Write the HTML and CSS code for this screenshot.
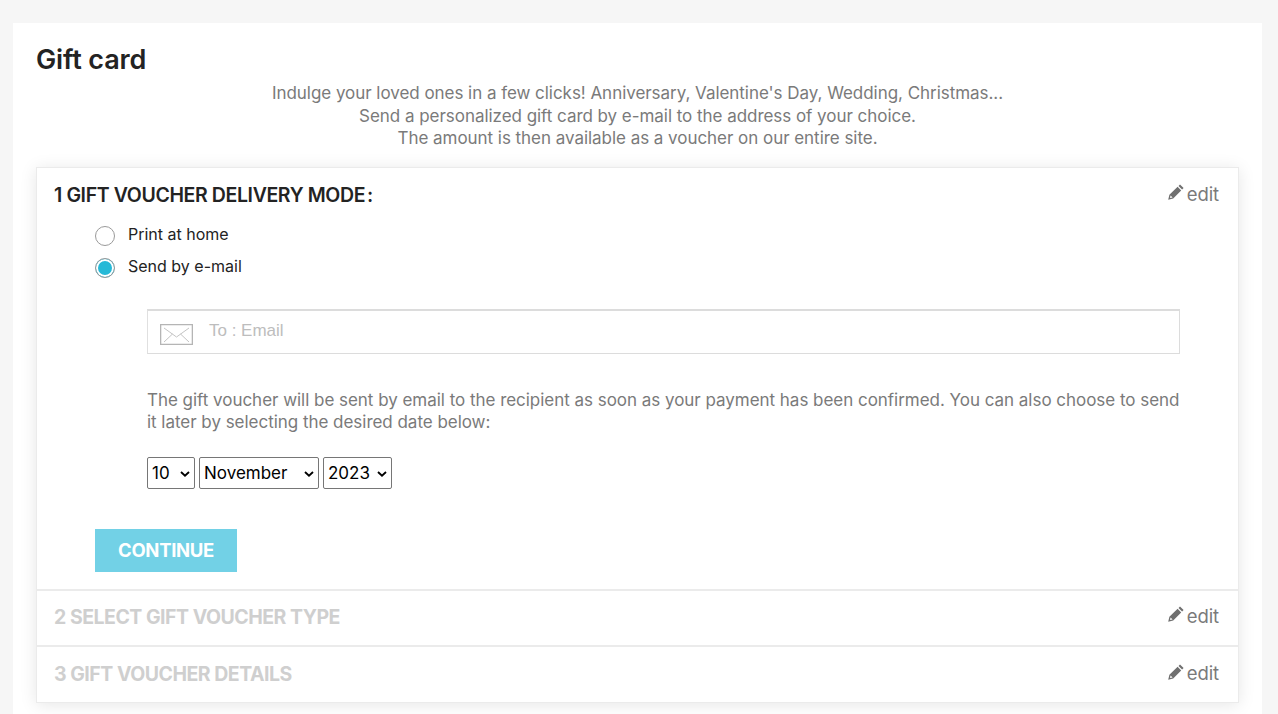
FILE: index.html
```html
<!DOCTYPE html>
<html>
<head>
    <title>Gift card</title>
    <link rel="stylesheet" href="styles.css">
</head>
<body>
    <div class="container">
        <h1>Gift card</h1>
        <div class="intro">
            <p>Indulge your loved ones in a few clicks! Anniversary, Valentine's Day, Wedding, Christmas...</p>
            <p>Send a personalized gift card by e-mail to the address of your choice.</p>
            <p>The amount is then available as a voucher on our entire site.</p>
        </div>

        <div class="steps">
            <section class="step step-open">
                <div class="step-head">
                    <h2>1 GIFT VOUCHER DELIVERY MODE<span class="colon">:</span></h2>
                    <a class="edit" href="#">
                        <svg class="pencil" viewBox="0 0 16 16"><path d="M12 0.4 15.6 4 14.1 5.5 10.5 1.9zM9.6 2.8 13.2 6.4 5.2 14.6 0.2 15.8 1.4 10.8zM2.6 11.4 2 14 4.6 13.4z"/></svg>
                        edit
                    </a>
                </div>
                <div class="modes">
                    <label class="mode"><span class="radio"></span>Print at home</label>
                    <label class="mode"><span class="radio radio-on"></span>Send by e-mail</label>
                </div>
                <div class="mail-form">
                    <div class="email-box">
                        <svg class="envelope" viewBox="0 0 33 21"><path d="M0.5 0.5H32.5V20.5H0.5z" fill="none" stroke="#b5b5b5" stroke-width="1.6"/><path d="M4 4 16.5 13 29 4M4 18 12.5 10M29 18 20.5 10" fill="none" stroke="#c4c4c4"/></svg>
                        <span class="placeholder">To : Email</span>
                    </div>
                    <p class="mail-note">The gift voucher will be sent by email to the recipient as soon as your payment has been confirmed. You can also choose to send it later by selecting the desired date below:</p>
                    <div class="date-row">
                        <select class="sel-day"><option>10</option></select>
                        <select class="sel-month"><option>November</option></select>
                        <select class="sel-year"><option>2023</option></select>
                    </div>
                </div>
                <button class="continue">CONTINUE</button>
            </section>

            <section class="step step-second">
                <div class="step-head">
                    <h2 class="muted">2 SELECT GIFT VOUCHER TYPE</h2>
                    <a class="edit" href="#">
                        <svg class="pencil" viewBox="0 0 16 16"><path d="M12 0.4 15.6 4 14.1 5.5 10.5 1.9zM9.6 2.8 13.2 6.4 5.2 14.6 0.2 15.8 1.4 10.8zM2.6 11.4 2 14 4.6 13.4z"/></svg>
                        edit
                    </a>
                </div>
            </section>

            <section class="step step-last">
                <div class="step-head">
                    <h2 class="muted">3 GIFT VOUCHER DETAILS</h2>
                    <a class="edit" href="#">
                        <svg class="pencil" viewBox="0 0 16 16"><path d="M12 0.4 15.6 4 14.1 5.5 10.5 1.9zM9.6 2.8 13.2 6.4 5.2 14.6 0.2 15.8 1.4 10.8zM2.6 11.4 2 14 4.6 13.4z"/></svg>
                        edit
                    </a>
                </div>
            </section>
        </div>
    </div>
</body>
</html>
```

FILE: styles.css
```css
html, body {
    height: 714px;
    overflow: hidden;
}
body {
    margin: 0;
    padding: 23px 16px 0 13px;
    background: #f6f6f6;
    color: #232323;
    font-family: Inter, "Liberation Sans", sans-serif;
}
.container {
    height: 720px;
    padding: 0 23px;
    background: #fff;
}
h1 {
    margin: 0;
    padding-top: 21px;
    font-size: 27px;
    line-height: 32px;
    font-weight: 600;
    letter-spacing: -0.15px;
    color: #232323;
}
.intro {
    margin-top: 6px;
    text-align: center;
    font-size: 17px;
    line-height: 22.5px;
    letter-spacing: -0.04px;
    color: #7a7a7a;
}
.intro p { margin: 0; }

.steps {
    margin-top: 17px;
    box-shadow: 0 2px 16px rgba(0, 0, 0, 0.1);
}
.step {
    background: #fff;
    border: 1px solid #ebebeb;
    border-top-width: 2px;
    border-bottom: 0;
}
.step-open {
    padding-bottom: 17px;
    border-top-width: 1px;
}
.step-last {
    border-bottom: 1px solid #ebebeb;
}

.step-head {
    display: flex;
    justify-content: space-between;
    align-items: center;
    height: 54px;
    padding: 0 19px 0 17px;
}
.step-second .step-head {
    height: 52px;
    padding-bottom: 2px;
}
.step-last .step-head { height: 55px; }
h2 {
    margin: 0;
    font-size: 19.5px;
    font-weight: 600;
    letter-spacing: -0.38px;
    color: #232323;
}
h2.muted {
    font-weight: 700;
    letter-spacing: -0.5px;
    color: #cfcfcf;
}
.colon { margin-left: 2px; }
.edit {
    display: flex;
    align-items: center;
    gap: 3px;
    margin-top: -2px;
    font-size: 18.5px;
    letter-spacing: -0.1px;
    color: #7a7a7a;
    text-decoration: none;
}
.pencil {
    width: 16px;
    height: 16px;
    margin-top: -3px;
    fill: #6f6f6f;
}

.modes {
    display: flex;
    flex-direction: column;
    gap: 10px;
    padding: 1px 0 0 58px;
}
.mode {
    display: flex;
    align-items: center;
    height: 22px;
    font-size: 16px;
    color: #232323;
}
.radio {
    box-sizing: border-box;
    width: 20px;
    height: 20px;
    margin: 4px 13px 0 0;
    border: 1px solid #9a9a9a;
    border-radius: 50%;
    background: #fff;
}
.radio-on {
    background: #25b9d7;
    box-shadow: inset 0 0 0 2px #fff;
}

.mail-form { padding: 0 58px 0 110px; }
.email-box {
    display: flex;
    align-items: center;
    box-sizing: border-box;
    height: 45px;
    margin-top: 32px;
    padding-left: 12px;
    border: 1px solid #dcdcdc;
    border-top-width: 2px;
    border-left-color: #e0e0e0;
}
.envelope {
    width: 33px;
    height: 21px;
    margin-top: 5px;
}
.placeholder {
    margin: -2px 0 0 16px;
    font-family: "Liberation Sans", Arial, sans-serif;
    font-size: 17px;
    color: #bdbdbd;
}
.mail-note {
    margin: 35px 0 0;
    font-size: 17px;
    line-height: 22.5px;
    letter-spacing: -0.03px;
    color: #7a7a7a;
}
.date-row {
    display: flex;
    gap: 4px;
    margin-top: 23px;
}
select {
    appearance: none;
    height: 32px;
    padding: 0 0 0 4px;
    border: 1px solid #767676;
    border-radius: 2px;
    background: #fff url("data:image/svg+xml,%3Csvg xmlns='http://www.w3.org/2000/svg' width='10' height='6'%3E%3Cpath d='M1 1l4 3.6L9 1' fill='none' stroke='%23000' stroke-width='1.9'/%3E%3C/svg%3E") no-repeat right 4px top 13px;
    color: #000;
    font-family: Inter, "Liberation Sans", sans-serif;
    font-size: 17px;
}
.sel-day { width: 48px; }
.sel-month { width: 120px; }
.sel-year { width: 69px; }

.continue {
    display: block;
    width: 142px;
    height: 43px;
    margin: 40px 0 0 58px;
    padding: 0;
    border: none;
    background: #72d1e6;
    color: #fff;
    font-family: Inter, "Liberation Sans", sans-serif;
    font-size: 18.5px;
    font-weight: 700;
    letter-spacing: -0.33px;
}
```
